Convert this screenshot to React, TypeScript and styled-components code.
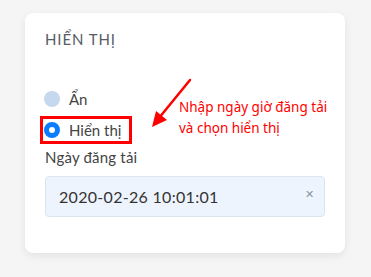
import styled, { createGlobalStyle } from "styled-components";

const GlobalStyle = createGlobalStyle`
  html, body {
    margin: 0;
    padding: 0;
    background: #f5f5f5;
    font-family: Lato, "Open Sans", sans-serif;
  }
`;

const Page = styled.div`
  padding: 13px 0 0 25px;
  width: 371px;
  height: 277px;
  box-sizing: border-box;
`;

const Card = styled.div`
  position: relative;
  width: 320px;
  height: 240px;
  box-sizing: border-box;
  background: #fff;
  border-radius: 8px;
  box-shadow: 0 3px 8px rgba(0, 0, 0, 0.08);
  padding: 16px 20px 0 20px;
`;

const Title = styled.div`
  font-size: 15px;
  color: #555c66;
  letter-spacing: 0.9px;
  line-height: 20px;
`;

const Options = styled.div`
  margin-top: 37px;
  display: flex;
  flex-direction: column;
  gap: 5px;
`;

const Option = styled.label<{ $boxed?: boolean }>`
  display: flex;
  align-items: center;
  gap: 9px;
  height: ${({ $boxed }) => ($boxed ? "28px" : "25px")};
  width: ${({ $boxed }) => ($boxed ? "92px" : "auto")};
  margin-left: -5px;
  padding-left: 1px;
  box-sizing: border-box;
  border: 3px solid ${({ $boxed }) => ($boxed ? "#ff0000" : "transparent")};
  font-size: 15px;
  color: #444;
`;

const Dot = styled.span<{ $checked?: boolean }>`
  width: 16px;
  height: 16px;
  border-radius: 50%;
  box-sizing: border-box;
  background: ${({ $checked }) => ($checked ? "#fff" : "#c6d8ee")};
  border: ${({ $checked }) => ($checked ? "5px solid #0a7cff" : "none")};
  flex-shrink: 0;
`;

const FieldLabel = styled.div`
  margin-top: 3px;
  font-size: 15px;
  letter-spacing: 0.2px;
  color: #444;
  line-height: 20px;
`;

const Input = styled.div`
  margin-top: 9px;
  height: 41px;
  width: 280px;
  box-sizing: border-box;
  background: #eef4fd;
  border: 1px solid #dbe5f1;
  border-radius: 4px;
  display: flex;
  align-items: center;
  justify-content: space-between;
  padding: 0 10px 0 13px;
  font-size: 16px;
  letter-spacing: 0.3px;
  color: #333;
`;

const Clear = styled.span`
  font-size: 11px;
  color: #8a94a0;
  margin-top: -6px;
`;

const Note = styled.div`
  position: absolute;
  left: 154px;
  top: 84px;
  font-family: "Noto Sans", sans-serif;
  font-size: 13.5px;
  line-height: 21px;
  color: #ff0000;
`;

const Arrow = styled.svg`
  position: absolute;
  left: 120px;
  top: 62px;
`;

export default function App() {
  return (
    <>
      <GlobalStyle />
      <Page>
        <Card>
          <Title>HIỂN THỊ</Title>
          <Options>
            <Option>
              <Dot />
              Ẩn
            </Option>
            <Option $boxed>
              <Dot $checked />
              Hiển thị
            </Option>
          </Options>
          <FieldLabel>Ngày đăng tải</FieldLabel>
          <Input>
            <span>2020-02-26 10:01:01</span>
            <Clear>✕</Clear>
          </Input>
          <Note>
            Nhập ngày giờ đăng tải
            <br />
            và chọn hiển thị
          </Note>
          <Arrow width="60" height="60" viewBox="0 0 60 60">
            <line x1="45" y1="5" x2="14" y2="43" stroke="#ff0000" strokeWidth="2.5" strokeLinecap="round" />
            <polygon points="7,52 11,36 22,45" fill="#ff0000" />
          </Arrow>
        </Card>
      </Page>
    </>
  );
}
